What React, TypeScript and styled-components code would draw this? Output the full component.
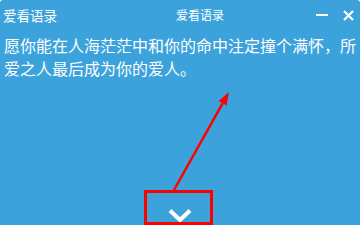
import React from "react";
import styled, { createGlobalStyle } from "styled-components";

const Global = createGlobalStyle`
  html, body { margin: 0; padding: 0; background: #ffffff; }
  body { font-family: "Noto Sans CJK SC", "Noto Sans", sans-serif; }
`;

const Window = styled.div`
  position: relative;
  width: 360px;
  height: 225px;
  background: #3ca2dc;
  border-radius: 3px 3px 0 0;
  display: flex;
  flex-direction: column;
  overflow: hidden;
  color: #ffffff;
`;

const TitleBar = styled.div`
  height: 30px;
  display: grid;
  grid-template-columns: 176px auto 1fr;
  align-items: center;
`;

const AppName = styled.div`
  padding-left: 3px;
  font-size: 13.5px;
  line-height: 30px;
`;

const CenterTitle = styled.div`
  font-size: 12px;
  line-height: 30px;
`;

const Controls = styled.div`
  display: flex;
  justify-content: flex-end;
  align-items: center;
  gap: 14px;
  padding-right: 6px;
`;

const CtrlBtn = styled.div`
  width: 12px;
  height: 12px;
  display: flex;
  align-items: center;
  justify-content: center;
`;

const Content = styled.div`
  flex: 1;
  padding: 4px 4px 0 4px;
  font-size: 16px;
  line-height: 23px;
`;

const Footer = styled.div`
  height: 30px;
  display: flex;
  justify-content: center;
  align-items: flex-start;
  padding-top: 8px;
  box-sizing: border-box;
`;

const Annotation = styled.svg`
  position: absolute;
  left: 0;
  top: 0;
  pointer-events: none;
`;

export default function App() {
  return (
    <>
      <Global />
      <Window>
        <TitleBar>
          <AppName>爱看语录</AppName>
          <CenterTitle>爱看语录</CenterTitle>
          <Controls>
            <CtrlBtn>
              <svg width="12" height="12" viewBox="0 0 12 12">
                <rect x="0" y="5" width="12" height="2" fill="#fff" />
              </svg>
            </CtrlBtn>
            <CtrlBtn>
              <svg width="11" height="11" viewBox="0 0 11 11">
                <path d="M1 1 L10 10 M10 1 L1 10" stroke="#fff" strokeWidth="2.2" />
              </svg>
            </CtrlBtn>
          </Controls>
        </TitleBar>
        <Content>愿你能在人海茫茫中和你的命中注定撞个满怀，所爱之人最后成为你的爱人。</Content>
        <Footer>
          <svg width="24" height="20" viewBox="0 0 24 20">
            <path d="M2 7.5 L12 17 L22 7.5" fill="none" stroke="#fff" strokeWidth="4" />
          </svg>
        </Footer>
        <Annotation width="360" height="225" viewBox="0 0 360 225">
          <line x1="174" y1="190" x2="222.6" y2="103.3" stroke="#ff0000" strokeWidth="2.5" />
          <polygon points="229,92 226.5,105.5 218.7,101.1" fill="#ff0000" />
          <rect x="145.5" y="191.5" width="66" height="32" fill="none" stroke="#ff0000" strokeWidth="3" />
        </Annotation>
      </Window>
    </>
  );
}
